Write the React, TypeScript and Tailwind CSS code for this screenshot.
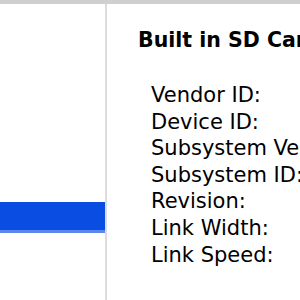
const rows = [
  "Vendor ID:",
  "Device ID:",
  "Subsystem Vendor ID:",
  "Subsystem ID:",
  "Revision:",
  "Link Width:",
  "Link Speed:",
];

export default function App() {
  return (
    <div className="w-[300px] h-[300px] overflow-hidden bg-white flex flex-col font-['DejaVu_Sans',Verdana,sans-serif] text-black">
      <div className="h-[4px] bg-[#cfcfcf] shrink-0" />
      <div className="flex flex-1 min-h-0">
        <div className="w-[107px] shrink-0 border-r-2 border-[#dcdcdc] pt-[198px]">
          <div className="h-[31px] bg-[#0a4de2] border-b-[3px] border-[#5b86ee]" />
        </div>
        <div className="flex-1 min-w-0 overflow-hidden pl-[31px] pt-[24px] whitespace-nowrap">
          <div className="text-[20.5px] font-bold leading-[24px]">Built in SD Card Reader</div>
          <div className="pl-[13px] pt-[30px] text-[21px] leading-[26.6px]">
            {rows.map((r) => (
              <div key={r}>{r}</div>
            ))}
          </div>
        </div>
      </div>
    </div>
  );
}
